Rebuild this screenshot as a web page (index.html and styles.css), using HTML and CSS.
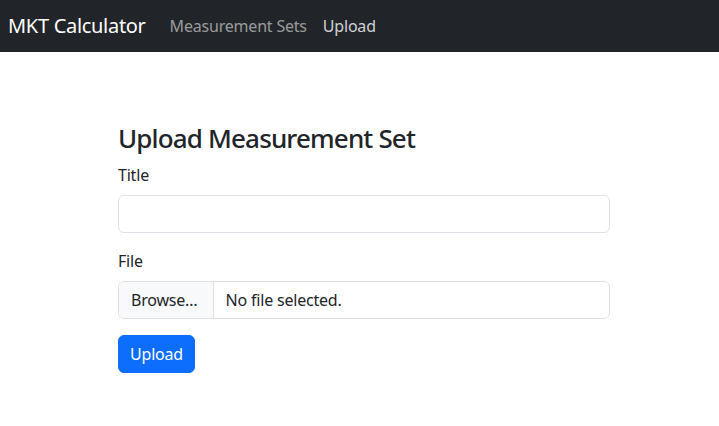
FILE: index.html
```html
<!DOCTYPE html>
<html lang="en">
<head>
<meta charset="utf-8">
<title>MKT Calculator</title>
<link rel="stylesheet" href="styles.css">
</head>
<body>
<nav class="navbar">
  <a class="brand" href="#">MKT Calculator</a>
  <ul class="nav">
    <li><a class="nav-link" href="#">Measurement Sets</a></li>
    <li><a class="nav-link active" href="#">Upload</a></li>
  </ul>
</nav>
<main class="page">
  <form class="form">
    <h2 class="title">Upload Measurement Set</h2>
    <div class="field">
      <label class="label" for="title">Title</label>
      <input class="control" id="title" type="text">
    </div>
    <div class="field">
      <label class="label">File</label>
      <div class="file">
        <span class="file-btn">Browse…</span>
        <span class="file-name">No file selected.</span>
      </div>
    </div>
    <button class="btn" type="button">Upload</button>
  </form>
</main>
</body>
</html>
```
FILE: styles.css
```css
* { box-sizing: border-box; }
body {
  margin: 0;
  font-family: "Noto Sans", "DejaVu Sans", sans-serif;
  font-size: 16px;
  line-height: 1.5;
  letter-spacing: -0.2px;
  color: #212529;
  background: #fff;
}
.navbar {
  height: 52px;
  background: #212529;
  display: flex;
  align-items: center;
  padding: 0 8px;
}
.brand {
  color: #fff;
  font-size: 20px;
  letter-spacing: -0.3px;
  text-decoration: none;
  margin-right: 16px;
  line-height: 30px;
}
.nav {
  list-style: none;
  margin: 0;
  padding: 0;
  display: flex;
}
.nav-link {
  display: block;
  padding: 8px;
  color: rgba(255,255,255,.55);
  text-decoration: none;
}
.nav-link.active { color: rgba(255,255,255,.8); }
.page {
  padding: 70px 0 0 118px;
}
.form { width: 492px; }
.title {
  margin: 0 0 8px;
  font-size: 26px;
  letter-spacing: -0.85px;
  font-weight: 500;
  line-height: 33px;
}
.field { margin-bottom: 16px; }
.label {
  display: block;
  margin-bottom: 8px;
}
.control {
  display: block;
  width: 100%;
  height: 38px;
  border: 1px solid #dee2e6;
  border-radius: 6px;
  font: inherit;
  padding: 6px 12px;
}
.file {
  display: flex;
  height: 38px;
  border: 1px solid #dee2e6;
  border-radius: 6px;
  overflow: hidden;
}
.file-btn {
  background: #f8f9fa;
  border-right: 1px solid #dee2e6;
  padding: 6px 15px 6px 12px;
}
.file-name { padding: 6px 12px; }
.btn {
  font: inherit;
  letter-spacing: inherit;
  color: #fff;
  background: #0d6efd;
  border: 1px solid #0d6efd;
  border-radius: 6px;
  height: 38px;
  padding: 6px 11px;
}
```
